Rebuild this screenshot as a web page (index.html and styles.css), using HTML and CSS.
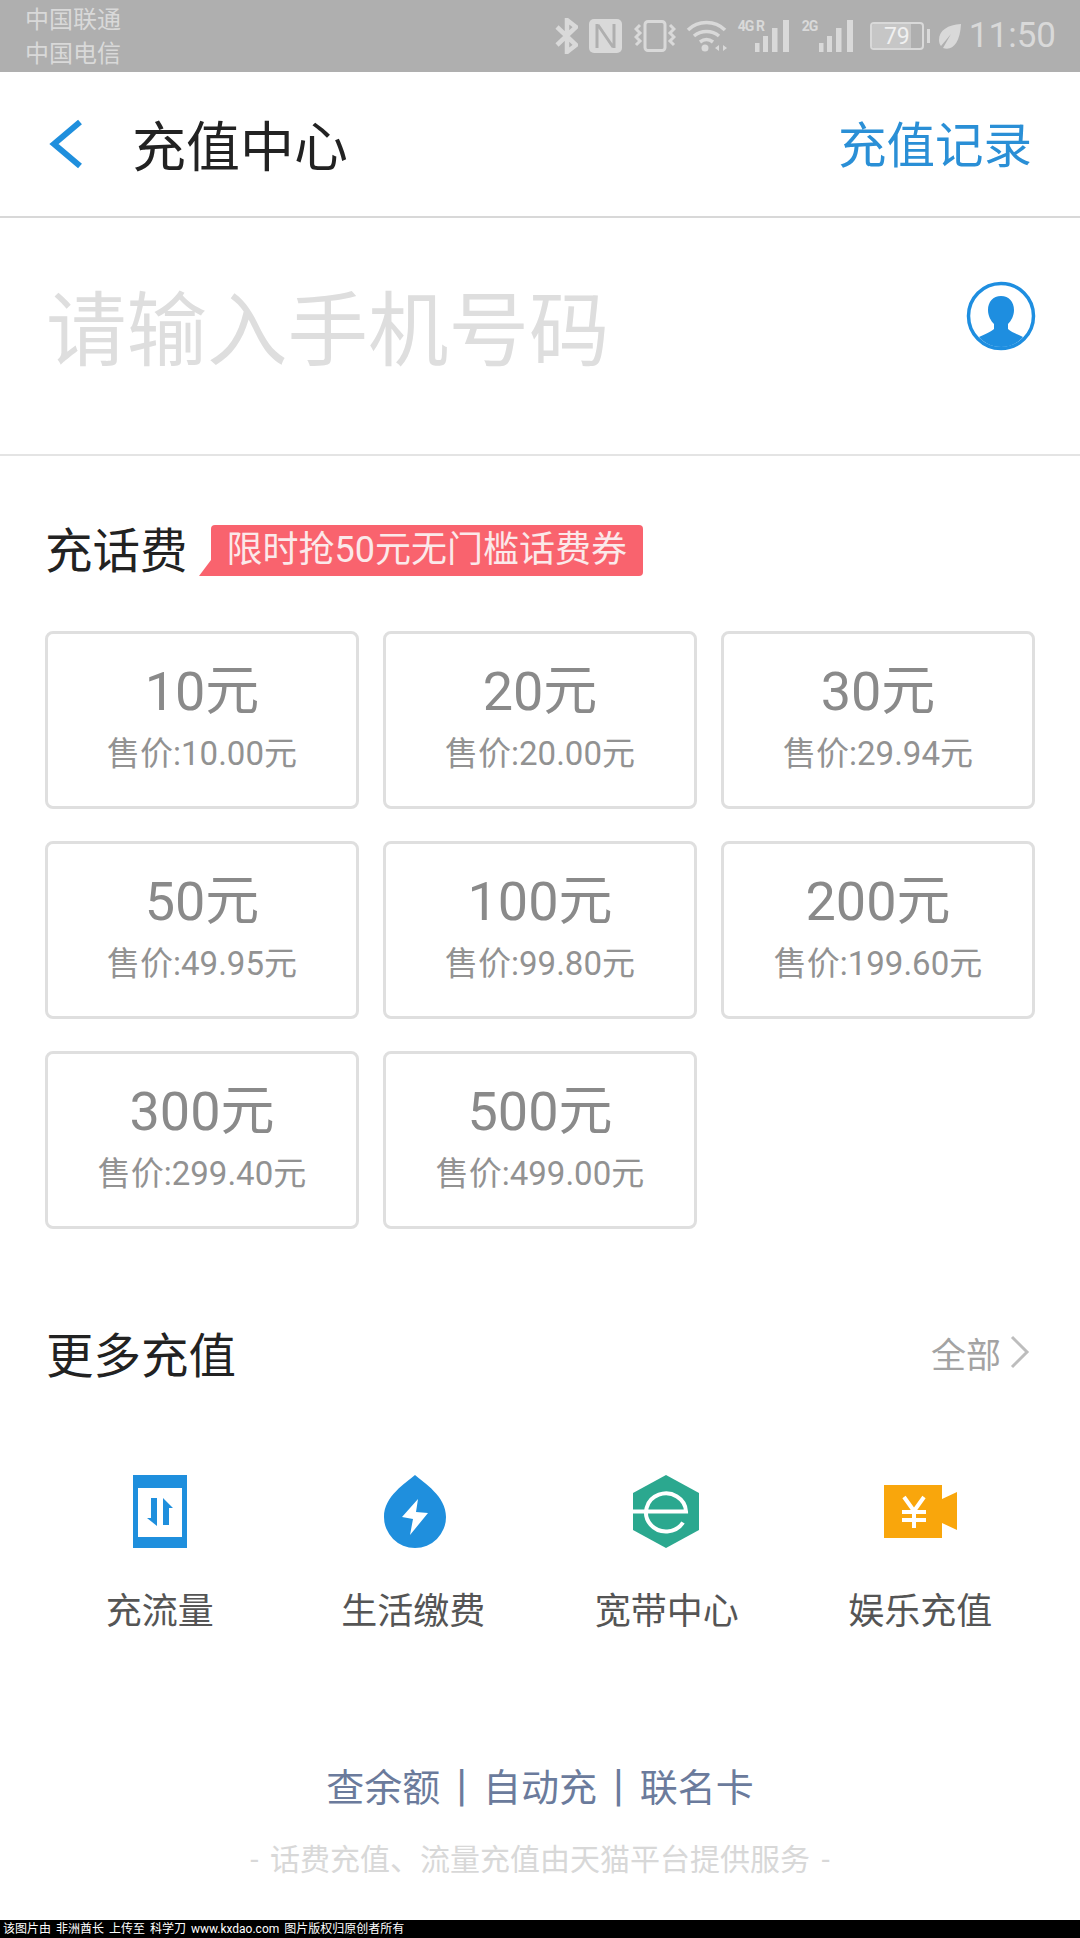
FILE: index.html
```html
<!DOCTYPE html>
<html>
<head>
    <meta charset="utf-8">
    <title>充值中心</title>
    <link rel="stylesheet" href="styles.css">
</head>
<body>
    <div class="statusbar">
        <div class="carriers">
            <div>中国联通</div>
            <div>中国电信</div>
        </div>
        <div class="status-right">
            <svg class="ic-bt" width="23" height="36" viewBox="0 0 23 36" fill="none" stroke="#d9d9d9" stroke-width="4.5"><path d="M2 9l19 18-9 7V2l9 7L2 27"/></svg>
            <svg class="ic-nfc" width="33" height="34" viewBox="0 0 33 34"><rect width="33" height="34" rx="5" fill="#d9d9d9"/><path d="M8 5v24M9 6l15 22M25 5v24" fill="none" stroke="#afafaf" stroke-width="3"/></svg>
            <svg class="ic-vib" width="42" height="32" viewBox="0 0 42 32" fill="none" stroke="#d9d9d9" stroke-width="3"><rect x="11" y="1.500" width="20" height="29" rx="3"/><path d="M6 5L2 9l4 4-4 4 4 4-4 4M36 5l4 4-4 4 4 4-4 4 4 4"/></svg>
            <svg class="ic-wifi" width="41" height="32" viewBox="0 0 41 32" fill="none" stroke="#d9d9d9" stroke-width="3.500"><path d="M2 10C12 0 29 0 39 10M8 16c7-6 18-6 25 0M14 22c4-3 9-3 13 0"/><circle cx="19" cy="28" r="3.500" fill="#d9d9d9" stroke="none"/><path d="M29 28l4-3v6zM41 28l-4-3v6z" fill="#d9d9d9" stroke="none"/></svg>
            <div class="signal">
                <span class="net">4G R</span>
                <svg width="34" height="32" viewBox="0 0 34 32" fill="#d9d9d9"><rect x="0" y="23" width="4.500" height="9"/><rect x="8" y="16" width="5" height="16"/><rect x="17" y="8" width="5.500" height="24"/><rect x="28" y="0" width="6" height="32"/></svg>
            </div>
            <div class="signal signal-2g">
                <span class="net">2G</span>
                <svg width="34" height="32" viewBox="0 0 34 32" fill="#d9d9d9"><rect x="0" y="23" width="4.500" height="9"/><rect x="8" y="16" width="5" height="16"/><rect x="17" y="8" width="5.500" height="24"/><rect x="28" y="0" width="6" height="32"/></svg>
            </div>
            <div class="battery">
                <div class="battery-body"><div class="battery-fill"></div><span class="battery-num">79</span></div>
                <div class="battery-nub"></div>
            </div>
            <svg class="ic-leaf" width="23" height="27" viewBox="0 0 23 27"><path d="M23 1C10 2 1 7 1 17c0 3 1 5 2 6L13 11 5 25c9 3 17-4 18-24z" fill="#d9d9d9"/></svg>
            <div class="time">11:50</div>
        </div>
    </div>

    <div class="header">
        <div class="header-left">
            <svg class="back" width="34" height="50" viewBox="0 0 34 50" fill="none" stroke="#1f8fdd" stroke-width="6"><path d="M31 3L5 25l26 22"/></svg>
            <div class="title">充值中心</div>
        </div>
        <div class="record">充值记录</div>
    </div>

    <div class="phone-row">
        <div class="placeholder">请输入手机号码</div>
        <svg class="contact" width="70" height="70" viewBox="0 0 70 70">
            <circle cx="35" cy="35" r="32.500" fill="none" stroke="#1e8ee0" stroke-width="3.500"/>
            <path d="M35 15c-8 0-13 6-13 14 0 6 3 11 6 14v5c-3 3-9 5-15 8 5 6 13 10 22 10s17-4 22-10c-6-3-12-5-15-8v-5c3-3 6-8 6-14 0-8-5-14-13-14z" fill="#1e8ee0"/>
        </svg>
    </div>

    <div class="recharge">
        <div class="recharge-head">
            <h2>充话费</h2>
            <div class="promo">限时抢50元无门槛话费券</div>
        </div>
        <div class="cards">
            <div class="card"><div class="face">10元</div><div class="price">售价:10.00元</div></div>
            <div class="card"><div class="face">20元</div><div class="price">售价:20.00元</div></div>
            <div class="card"><div class="face">30元</div><div class="price">售价:29.94元</div></div>
            <div class="card"><div class="face">50元</div><div class="price">售价:49.95元</div></div>
            <div class="card"><div class="face">100元</div><div class="price">售价:99.80元</div></div>
            <div class="card"><div class="face">200元</div><div class="price">售价:199.60元</div></div>
            <div class="card"><div class="face">300元</div><div class="price">售价:299.40元</div></div>
            <div class="card"><div class="face">500元</div><div class="price">售价:499.00元</div></div>
        </div>
    </div>

    <div class="more">
        <div class="more-head">
            <h2>更多充值</h2>
            <div class="all">全部<svg width="20" height="34" viewBox="0 0 20 34" fill="none" stroke="#bdbdbd" stroke-width="3"><path d="M2 2l15 15L2 32"/></svg></div>
        </div>
        <div class="services">
            <div class="service">
                <div class="service-icon">
                    <svg width="54" height="73" viewBox="0 0 54 73"><path fill="#1f8fdd" d="M0 0h54v73H0z"/><path fill="#fff" d="M5 13h44v49H5z"/><path fill="#1f8fdd" d="M18 23h6v28l-10-8h4zM30 23l10 10h-4v17h-6z"/></svg>
                </div>
                <div class="service-name">充流量</div>
            </div>
            <div class="service">
                <div class="service-icon ic-drop">
                    <svg width="62" height="73" viewBox="0 0 62 73"><path fill="#1f8fdd" d="M31 0c9 8 31 21 31 42a31 31 0 0 1-62 0C0 21 22 8 31 0z"/><path fill="#fff" d="M34 24L18 42l11 2-3 16 18-22-12-1z"/></svg>
                </div>
                <div class="service-name">生活缴费</div>
            </div>
            <div class="service">
                <div class="service-icon ic-hex">
                    <svg width="66" height="73" viewBox="0 0 66 73"><path fill="#2ba88f" d="M33 0l33 18v37L33 73 0 55V18z"/><path fill="none" stroke="#fff" stroke-width="4" d="M0 36.500h53a20 19 0 1 0-3 11"/></svg>
                </div>
                <div class="service-name">宽带中心</div>
            </div>
            <div class="service">
                <div class="service-icon">
                    <svg width="73" height="53" viewBox="0 0 73 53"><path fill="#f9a60c" d="M0 0h58v14l15-7v38l-15-7v15H0z"/><path fill="none" stroke="#fff" stroke-width="4" d="M20 12l10 14 10-14M18 27h24M18 35h24M30 26v17"/></svg>
                </div>
                <div class="service-name">娱乐充值</div>
            </div>
        </div>
    </div>

    <div class="links">
        <span>查余额</span><span class="sep">|</span><span>自动充</span><span class="sep">|</span><span>联名卡</span>
    </div>
    <div class="notice">- 话费充值、流量充值由天猫平台提供服务 -</div>

    <div class="watermark">该图片由 非洲酋长 上传至 科学刀 www.kxdao.com 图片版权归原创者所有</div>
</body>
</html>
```

FILE: styles.css
```css
*{
    margin: 0;
    padding: 0;
    box-sizing: border-box;
}
body{
    width: 1080px;
    height: 1938px;
    background: #fff;
    font-family: Roboto, "Noto Sans CJK SC", sans-serif;
    overflow: hidden;
    position: relative;
}
h2{
    font-weight: 400;
    font-size: 47.500px;
    color: #222;
}

/* status bar */
.statusbar{
    height: 72px;
    background: #afafaf;
    display: flex;
    justify-content: space-between;
    align-items: center;
    padding: 0 24px 0 25px;
    color: #d9d9d9;
}
.carriers{
    padding-top: 2px;
    font-size: 24px;
    line-height: 34px;
}
.status-right{
    display: flex;
    align-items: center;
}
.ic-bt{margin-right: 11px;}
.ic-nfc{margin-right: 12px;}
.ic-vib{margin-right: 10px;}
.ic-wifi{margin-right: 11px;}
.signal{
    display: flex;
    align-items: flex-end;
    position: relative;
    padding-left: 17px;
    margin-right: 13px;
}
.signal-2g{margin-right: 17px;}
.net{
    position: absolute;
    left: 0;
    top: -1px;
    font-size: 14px;
    font-weight: 700;
    letter-spacing: -1px;
    line-height: 14px;
    white-space: nowrap;
}
.battery{
    display: flex;
    align-items: center;
    margin-right: 8px;
}
.battery-body{
    width: 54px;
    height: 28px;
    border: 2px solid #d9d9d9;
    border-radius: 4px;
    position: relative;
    overflow: hidden;
    display: flex;
    justify-content: center;
    align-items: center;
}
.battery-fill{
    position: absolute;
    left: 0;
    top: 0;
    bottom: 0;
    width: 79%;
    background: #c6c6c6;
}
.battery-num{
    position: relative;
    font-size: 23px;
    color: #f0f0f0;
}
.battery-nub{
    width: 3px;
    height: 14px;
    margin-left: 3px;
    background: #d9d9d9;
}
.ic-leaf{margin-right: 8px;}
.time{
    font-size: 35px;
    line-height: 40px;
}

/* header */
.header{
    height: 146px;
    border-bottom: 2px solid #d8d8d8;
    display: flex;
    justify-content: space-between;
    align-items: center;
    padding: 0 48px 0 49px;
}
.header-left{
    display: flex;
    align-items: center;
}
.back{margin-right: 49px;}
.title{
    font-size: 54px;
    color: #222;
    margin-bottom: 2px;
}
.record{
    font-size: 48.500px;
    color: #2a8fd6;
    margin-bottom: 4px;
}

/* phone input */
.phone-row{
    height: 238px;
    border-bottom: 2px solid #e4e4e4;
    padding: 63px 44px 0 46px;
    display: flex;
    justify-content: space-between;
    align-items: flex-start;
}
.placeholder{
    margin-top: 1px;
    font-size: 80.500px;
    line-height: 100px;
    color: #dedede;
}

/* recharge cards */
.recharge{
    padding: 68px 45px 0 45px;
}
.recharge-head{
    display: flex;
    align-items: center;
    height: 52px;
}
.recharge-head h2{
    margin-bottom: 6px;
}
.promo{
    position: relative;
    margin-left: 23px;
    padding: 0 16px;
    height: 51px;
    line-height: 50px;
    font-size: 36px;
    color: #fbe9ea;
    background: #f9636e;
    border-radius: 4px 4px 4px 0;
    white-space: nowrap;
}
.promo:before{
    content: "";
    position: absolute;
    left: -12px;
    bottom: 0;
    border-bottom: 16px solid #f9636e;
    border-left: 12px solid transparent;
}
.cards{
    margin-top: 55px;
    display: grid;
    grid-template-columns: repeat(3, 1fr);
    column-gap: 24px;
    row-gap: 32px;
}
.card{
    height: 178px;
    border: 3px solid #dfdfdf;
    border-radius: 8px;
    text-align: center;
    padding-top: 26px;
}
.face{
    font-size: 54px;
    line-height: 64px;
    color: #8a8a8a;
}
.price{
    font-size: 33px;
    line-height: 60px;
    color: #929292;
}

/* more */
.more{
    padding: 88px 0 0 0;
}
.more-head{
    display: flex;
    justify-content: space-between;
    align-items: center;
    height: 70px;
    padding: 0 50px 0 46px;
}
.all{
    display: flex;
    align-items: center;
    font-size: 35px;
    color: #a3a3a3;
}
.all svg{margin-left: 9px;}
.services{
    margin-top: 88px;
    padding: 0 33px;
    display: grid;
    grid-template-columns: repeat(4, 1fr);
}
.service{
    display: flex;
    flex-direction: column;
    align-items: center;
}
.service-icon{
    height: 73px;
    display: flex;
    align-items: center;
}
.ic-drop{margin-left: 3px;}
.ic-hex{margin-right: 2px;}
.service-name{
    margin-top: 39px;
    font-size: 36px;
    line-height: 50px;
    color: #555;
}

/* footer */
.links{
    margin-top: 117px;
    height: 60px;
    display: flex;
    justify-content: center;
    align-items: center;
    font-size: 38px;
    color: #6b7b9c;
}
.sep{
    margin: 0 15px;
    font-family: "DejaVu Sans", sans-serif;
    font-size: 38px;
}
.notice{
    margin-top: 24px;
    text-align: center;
    font-size: 30px;
    line-height: 44px;
    word-spacing: 4px;
    color: #d8d8d8;
}
.watermark{
    position: absolute;
    left: 0;
    right: 0;
    bottom: 0;
    height: 18px;
    background: #000;
    color: #fff;
    font-size: 12px;
    line-height: 18px;
    padding-left: 3px;
    word-spacing: 2px;
    white-space: nowrap;
}
```
